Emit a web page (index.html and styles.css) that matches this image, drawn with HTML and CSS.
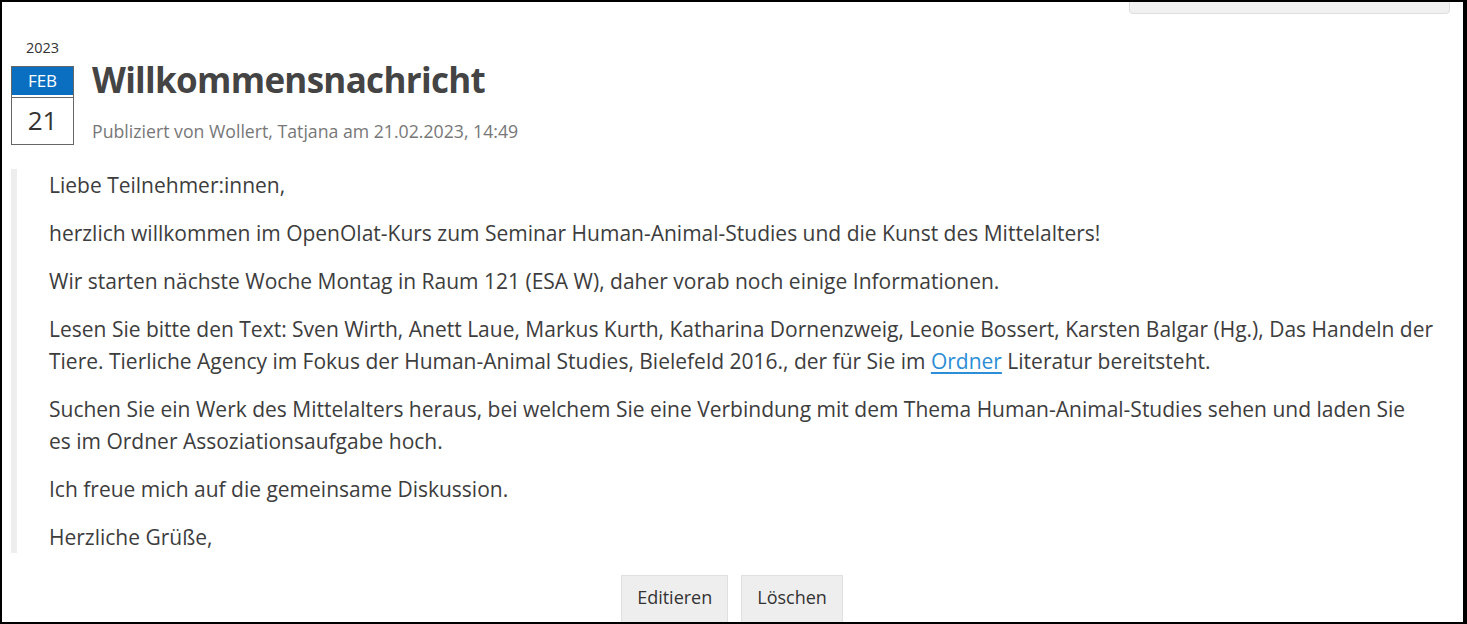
FILE: index.html
```html
<!DOCTYPE html>
<html lang="de">
<head>
<meta charset="utf-8">
<link rel="stylesheet" href="styles.css">
<title>Willkommensnachricht</title>
</head>
<body>
<div class="frame">
  <div class="topbox"></div>
  <div class="news">
    <header class="head">
      <div class="date">
        <div class="year">2023</div>
        <div class="cal">
          <div class="month">FEB</div>
          <div class="day">21</div>
        </div>
      </div>
      <div class="titles">
        <h1 class="title">Willkommensnachricht</h1>
        <div class="meta">Publiziert von Wollert, Tatjana am 21.02.2023, 14:49</div>
      </div>
    </header>
    <div class="content">
      <p>Liebe Teilnehmer:innen,</p>
      <p>herzlich willkommen im OpenOlat-Kurs zum Seminar Human-Animal-Studies und die Kunst des Mittelalters!</p>
      <p>Wir starten nächste Woche Montag in Raum 121 (ESA W), daher vorab noch einige Informationen.</p>
      <p>Lesen Sie bitte den Text: Sven Wirth, Anett Laue, Markus Kurth, Katharina Dornenzweig, Leonie Bossert, Karsten Balgar (Hg.), Das Handeln der<br>Tiere. Tierliche Agency im Fokus der Human-Animal Studies, Bielefeld 2016., der für Sie im <a href="#" class="link">Ordner</a> Literatur bereitsteht.</p>
      <p>Suchen Sie ein Werk des Mittelalters heraus, bei welchem Sie eine Verbindung mit dem Thema Human-Animal-Studies sehen und laden Sie<br>es im Ordner Assoziationsaufgabe hoch.</p>
      <p>Ich freue mich auf die gemeinsame Diskussion.</p>
      <p>Herzliche Grüße,</p>
    </div>
    <div class="buttons">
      <button class="btn" type="button">Editieren</button>
      <button class="btn" type="button">Löschen</button>
    </div>
  </div>
</div>
</body>
</html>
```

FILE: styles.css
```css
html, body {
  margin: 0;
  padding: 0;
  background: #ffffff;
}
body {
  font-family: "Open Sans", "Noto Sans", sans-serif;
  color: #3d3d3d;
}
.frame {
  position: relative;
  box-sizing: border-box;
  width: 1467px;
  height: 624px;
  border-top: 2px solid #000;
  border-left: 2px solid #000;
  border-right: 4px solid #000;
  border-bottom: 2px solid #000;
  overflow: hidden;
}
.topbox {
  position: absolute;
  top: -6px;
  left: 1127px;
  width: 319px;
  height: 16px;
  background: #f0f0f0;
  border: 1px solid #dedede;
  border-radius: 4px;
}
.news {
  padding: 36px 0 0 9px;
}
.head {
  display: flex;
  gap: 18px;
}
.date {
  width: 63px;
  display: flex;
  flex-direction: column;
  align-items: center;
}
.year {
  font-size: 14.5px;
  line-height: 20px;
  color: #333;
  margin-bottom: 8px;
}
.cal {
  width: 63px;
  box-sizing: border-box;
  border: 1px solid #666;
}
.month {
  background: #0a6fc0;
  color: #fff;
  text-align: center;
  font-size: 17px;
  line-height: 28px;
  border-bottom: 2px solid #fff;
  box-shadow: 0 1px 0 #666;
}
.day {
  text-align: center;
  font-size: 26px;
  line-height: 47px;
  color: #333;
}
.titles {
  padding-top: 19px;
}
.title {
  margin: 0;
  font-size: 35px;
  line-height: 46px;
  font-weight: 700;
  color: #444;
  letter-spacing: -0.7px;
}
.meta {
  margin-top: 15px;
  font-size: 17.7px;
  line-height: 26px;
  color: #777;
}
.content {
  margin-top: 24px;
  border-left: 6px solid #eeeeee;
  padding-left: 32px;
  margin-right: 12px;
  font-size: 21px;
  line-height: 32px;
  white-space: nowrap;
}
.content p {
  margin: 16px 0 0 0;
}
.content p:first-child {
  margin-top: 0;
}
.link {
  color: #2b8ed6;
  text-decoration: underline;
  text-underline-offset: 3px;
}
.buttons {
  display: flex;
  justify-content: center;
  gap: 13px;
  margin-top: 22px;
  padding-right: 10px;
}
.btn {
  font-family: inherit;
  font-size: 18px;
  color: #333;
  background: #eeeeee;
  border: 1px solid #e0e0e0;
  height: 48px;
  padding: 0 15px 4px;
  border-radius: 0;
}
```
